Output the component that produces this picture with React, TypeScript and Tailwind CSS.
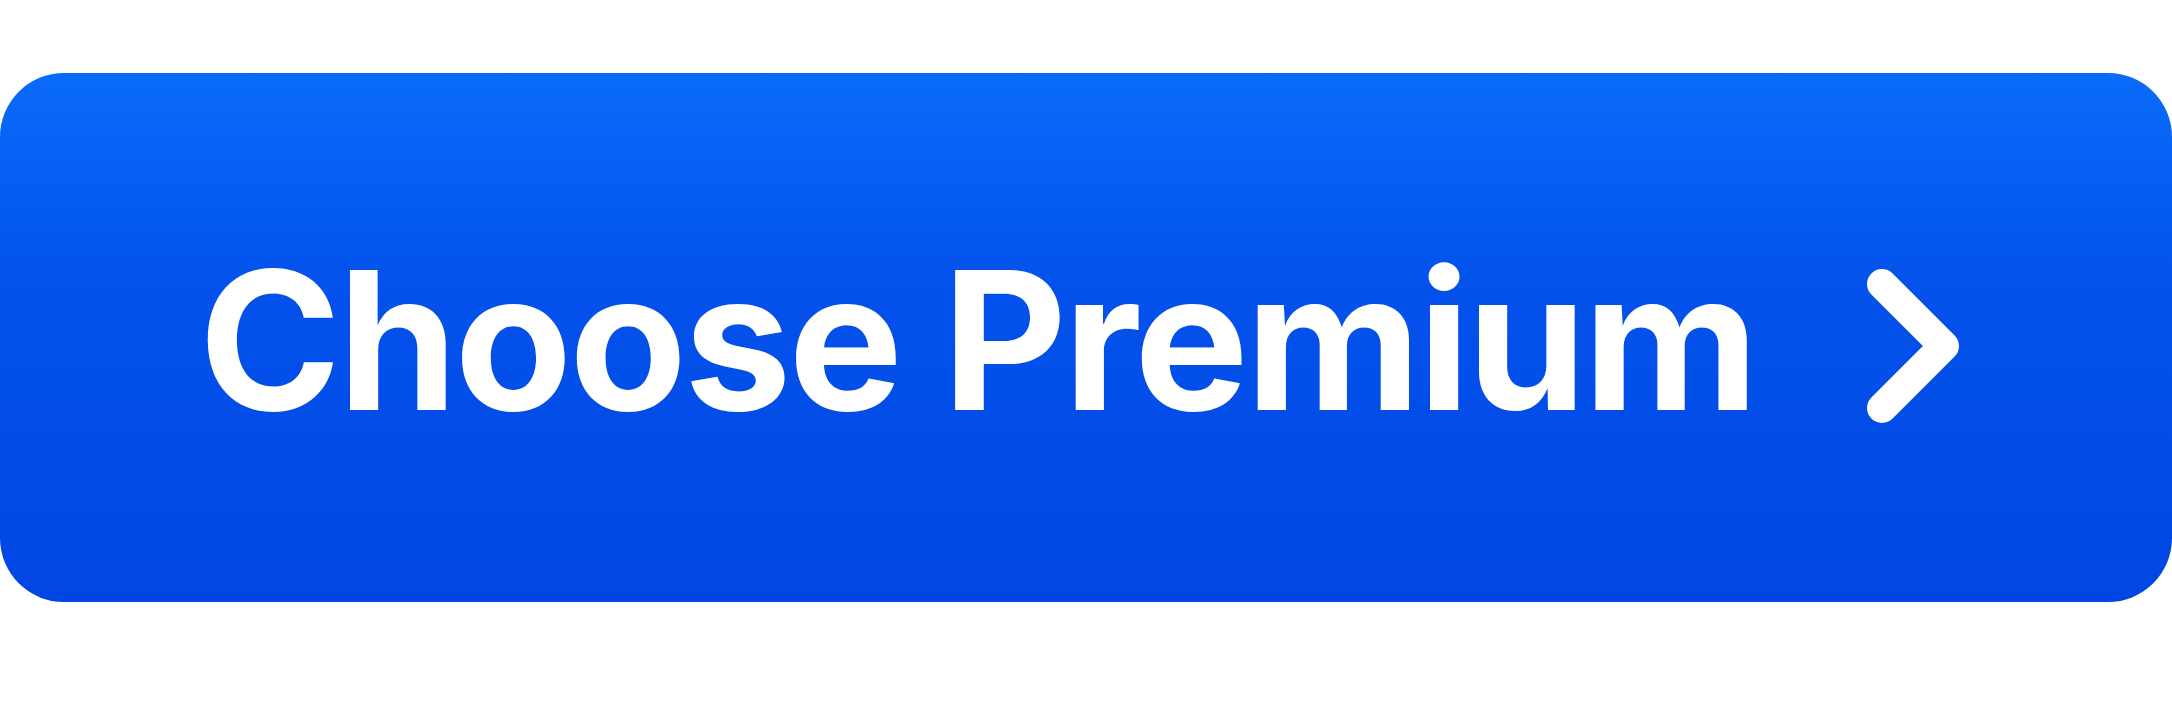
export default function App() {
  return (
    <div className="w-[2172px] h-[724px] bg-white pt-[73px]">
      <button
        type="button"
        className="w-full h-[529px] rounded-[64px] bg-linear-to-b from-[#0a6bfa] from-0% via-[#0452eb] via-40% to-[#0046e3] flex items-center justify-between pl-[199px] pr-[212px] text-white"
      >
        <span
          className="mt-[4px] text-[192px] leading-none font-bold tracking-[-3px] whitespace-nowrap"
          style={{ fontFamily: 'Inter, "Liberation Sans", sans-serif' }}
        >
          Choose Premium
        </span>
        <svg width="94" height="156" viewBox="0 0 94 156" fill="none" className="mt-[17px]">
          <path d="M16 16 L78 78 L16 140" stroke="white" strokeWidth="30" strokeLinecap="round" strokeLinejoin="round" />
        </svg>
      </button>
    </div>
  );
}
